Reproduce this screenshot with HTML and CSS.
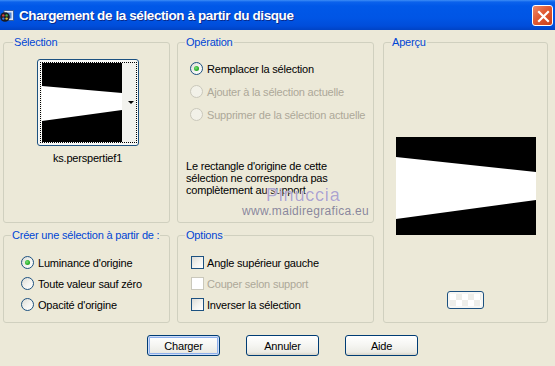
FILE: index.html
```html
<!DOCTYPE html>
<html lang="fr">
<head>
<meta charset="utf-8">
<title>Chargement de la sélection à partir du disque</title>
<link rel="stylesheet" href="styles.css">
</head>
<body>
<div class="window">
  <header class="titlebar">
    <svg class="app-icon" viewBox="0 0 14 14" aria-hidden="true">
      <rect x="4" y="1.5" width="9.5" height="10" fill="#dfe9f7" stroke="#3a5f9c" stroke-width="1"/>
      <rect x="6" y="3.5" width="5.5" height="6" fill="#4f86d6"/>
      <circle cx="5" cy="8" r="4.8" fill="#1b1b22"/>
      <circle cx="3.3" cy="6.4" r="1.2" fill="#d94040"/>
      <circle cx="6.6" cy="6.4" r="1.2" fill="#3fb24a"/>
      <circle cx="3.3" cy="9.6" r="1.2" fill="#3a7be0"/>
      <circle cx="6.6" cy="9.6" r="1.2" fill="#e0c030"/>
    </svg>
    <span class="title">Chargement de la sélection à partir du disque</span>
    <button class="close" type="button" aria-label="Fermer">
      <svg viewBox="0 0 21 21" width="21" height="21" aria-hidden="true">
        <path d="M6 6 L15 15 M15 6 L6 15" stroke="#fff" stroke-width="2.2" stroke-linecap="square"/>
      </svg>
    </button>
  </header>

  <main class="content">
    <div class="groups">
      <fieldset class="group g-sel">
        <legend>Sélection</legend>
        <div class="thumb">
          <div class="focus">
            <svg class="thumb-img" viewBox="0 0 80 79" width="80" height="79" aria-hidden="true">
              <rect width="80" height="79" fill="#000"/>
              <polygon points="0,23 80,30 80,47 0,58" fill="#fff"/>
            </svg>
            <div class="drop"><span class="caret"></span></div>
          </div>
        </div>
        <div class="thumb-name">ks.perspertief1</div>
      </fieldset>

      <fieldset class="group g-op">
        <legend>Opération</legend>
        <div class="opts op-opts">
          <div class="opt"><span class="radio checked"></span>Remplacer la sélection</div>
          <div class="opt disabled"><span class="radio"></span>Ajouter à la sélection actuelle</div>
          <div class="opt disabled"><span class="radio"></span>Supprimer de la sélection actuelle</div>
        </div>
        <p class="note">Le rectangle d'origine de cette<br>sélection ne correspondra pas<br>complètement au support
          <span class="wm wm-name">Pinuccia</span>
          <span class="wm wm-url">www.maidiregrafica.eu</span>
        </p>
      </fieldset>

      <fieldset class="group g-prev">
        <legend>Aperçu</legend>
        <svg class="preview" viewBox="0 0 140 98" width="140" height="98" aria-hidden="true">
          <rect width="140" height="98" fill="#000"/>
          <polygon points="0,20 140,35 140,63 0,82" fill="#fff"/>
        </svg>
        <button class="mini" type="button" aria-label="Arrière-plan"><span class="checker"></span></button>
      </fieldset>

      <fieldset class="group g-src">
        <legend>Créer une sélection à partir de :</legend>
        <div class="opts src-opts">
          <div class="opt"><span class="radio checked"></span>Luminance d'origine</div>
          <div class="opt"><span class="radio"></span>Toute valeur sauf zéro</div>
          <div class="opt"><span class="radio"></span>Opacité d'origine</div>
        </div>
      </fieldset>

      <fieldset class="group g-opt">
        <legend>Options</legend>
        <div class="opts chk-opts">
          <div class="opt"><span class="check"></span>Angle supérieur gauche</div>
          <div class="opt disabled"><span class="check"></span>Couper selon support</div>
          <div class="opt"><span class="check"></span>Inverser la sélection</div>
        </div>
      </fieldset>
    </div>

    <div class="buttons">
      <button class="btn default" type="button">Charger</button>
      <button class="btn" type="button">Annuler</button>
      <button class="btn" type="button">Aide</button>
    </div>
  </main>
</div>
</body>
</html>
```

FILE: styles.css
```css
* { box-sizing: border-box; }

html, body { margin: 0; padding: 0; }

body {
  width: 555px;
  height: 366px;
  overflow: hidden;
  background: #ECE9D8;
  font-family: "Liberation Sans", Arial, sans-serif;
  font-size: 11px;
  letter-spacing: -0.2px;
  color: #000;
}

/* ---------- title bar ---------- */
.titlebar {
  height: 30px;
  display: flex;
  align-items: center;
  background: linear-gradient(to bottom,
    #3D8DF6 0px, #0B62EC 2px, #0058E8 6px, #0055E5 18px, #004DDA 26px, #0043C4 30px);
}

.app-icon {
  width: 14px;
  height: 14px;
  flex: none;
  margin-top: 1px;
}

.title {
  flex: 1;
  margin-left: 5px;
  color: #fff;
  font-weight: bold;
  font-size: 13.5px;
  letter-spacing: -0.4px;
  text-shadow: 1px 1px 0 #0A2A8A;
  white-space: nowrap;
}

.close {
  width: 21px;
  height: 21px;
  margin-right: 2px;
  padding: 0;
  border: 1px solid #fff;
  border-radius: 3px;
  background: linear-gradient(135deg, #F08A68 0%, #E05A34 45%, #CC3E17 100%);
  display: grid;
  place-items: center;
}
.close svg { display: block; }

/* ---------- content ---------- */
.content {
  padding: 6px 0 0 3px;
}

.groups {
  display: grid;
  grid-template-columns: 167px 197px 167px;
  grid-template-rows: 187px 94px;
  column-gap: 7px;
  row-gap: 6px;
}

.group {
  margin: 0;
  padding: 0;
  min-width: 0;
  border: 1px solid #D0D0BF;
  border-radius: 3px;
}

.group legend {
  margin-left: 7px;
  padding: 0 1px;
  color: #0046D5;
  font-size: 11px;
  line-height: 13px;
}

/* Sélection */
.g-sel {
  display: flex;
  flex-direction: column;
  align-items: center;
  padding-top: 10px;
  padding-left: 2px;
}

.thumb {
  width: 102px;
  height: 87px;
  border: 1px solid #1C5180;
  border-radius: 3px;
  background: #F7F7F4;
  padding: 2px 1px 2px 2px;
}

.focus {
  height: 100%;
  border: 1px dotted #000;
  display: flex;
  padding-left: 1px;
}

.thumb-img { display: block; flex: none; }

.drop {
  flex: 1;
  display: flex;
  align-items: center;
  justify-content: flex-end;
  padding-right: 2px;
  background: #F2F2EE;
}

.caret {
  width: 0;
  height: 0;
  border-left: 3px solid transparent;
  border-right: 3px solid transparent;
  border-top: 3px solid #000;
}

.thumb-name {
  margin-top: 6px;
  line-height: 13px;
  font-size: 11px;
}

/* options lists */
.opts {
  display: flex;
  flex-direction: column;
}

.opt {
  display: flex;
  align-items: center;
  gap: 4px;
  white-space: nowrap;
}

.opt.disabled { color: #ACA899; }

.op-opts { padding: 8px 0 0 12px; }
.op-opts .opt { height: 23px; }

.src-opts { padding: 10px 0 0 17px; }
.src-opts .opt { height: 21px; }

.chk-opts { padding: 10px 0 0 13px; }
.chk-opts .opt { height: 21px; gap: 3px; }

.radio {
  width: 13px;
  height: 13px;
  flex: none;
  border-radius: 50%;
  border: 1px solid #1C5180;
  background: linear-gradient(135deg, #DCDCD6 0%, #F4F4F0 55%, #FFFFFF 100%);
  display: grid;
  place-items: center;
}

.radio.checked::after {
  content: "";
  width: 5px;
  height: 5px;
  border-radius: 50%;
  background: radial-gradient(circle at 40% 40%, #7BE27B 0%, #2DB02D 55%, #1A8A1A 100%);
}

.opt.disabled .radio {
  border-color: #CAC8BB;
  background: #F2F1E8;
}

.check {
  width: 13px;
  height: 13px;
  flex: none;
  border: 1px solid #1C5180;
  background: linear-gradient(135deg, #DCDCD7 0%, #F4F4F0 55%, #FFFFFF 100%);
}

.opt.disabled .check {
  border-color: #CAC8BB;
  background: #FFFFFF;
}

.note {
  position: relative;
  margin: 34px 0 0 0;
  padding-left: 8px;
  line-height: 12px;
  font-size: 11px;
}

.wm {
  position: absolute;
  white-space: nowrap;
  pointer-events: none;
}

.wm-name {
  left: 88px;
  top: 25px;
  font-size: 18px;
  line-height: 20px;
  letter-spacing: 0.8px;
  color: rgba(166, 156, 200, 0.92);
  text-shadow: 0 0 1px #fff, 0 0 2px #ECE9D8;
}

.wm-url {
  left: 64px;
  top: 44px;
  font-size: 12px;
  line-height: 14px;
  letter-spacing: 0.3px;
  color: rgba(118, 116, 146, 0.85);
}

/* Aperçu */
.g-prev {
  grid-row: 1 / span 2;
  grid-column: 3;
  margin-left: 2px;
  display: flex;
  flex-direction: column;
  align-items: center;
}

.preview {
  display: block;
  margin-top: 88px;
}

.mini {
  margin-top: 56px;
  width: 37px;
  height: 18px;
  padding: 2px;
  border: 1px solid #1C5180;
  border-radius: 3px;
  background: #F6F6F3;
}

.checker {
  display: block;
  width: 100%;
  height: 100%;
  background-color: #FFFFFF;
  background-image:
    linear-gradient(45deg, #EEEEEA 25%, transparent 25%, transparent 75%, #EEEEEA 75%),
    linear-gradient(45deg, #EEEEEA 25%, transparent 25%, transparent 75%, #EEEEEA 75%);
  background-size: 12px 12px;
  background-position: 0 0, 6px 6px;
}

.g-src { grid-row: 2; grid-column: 1; }
.g-opt { grid-row: 2; grid-column: 2; }

/* dialog buttons */
.buttons {
  display: flex;
  gap: 26px;
  padding-left: 144px;
  margin-top: 12px;
}

.btn {
  width: 73px;
  height: 21px;
  padding: 0;
  border: 1px solid #003C74;
  border-radius: 3px;
  background: linear-gradient(to bottom, #FFFFFF 0%, #F6F6F3 45%, #ECEBE5 85%, #D8D4C8 100%);
  font-family: "Liberation Sans", Arial, sans-serif;
  font-size: 11px;
  letter-spacing: -0.2px;
  color: #000;
}

.btn.default {
  box-shadow: inset 0 0 0 1px #CEDDF8, inset 0 0 0 2px #8FB0EC;
}
```
